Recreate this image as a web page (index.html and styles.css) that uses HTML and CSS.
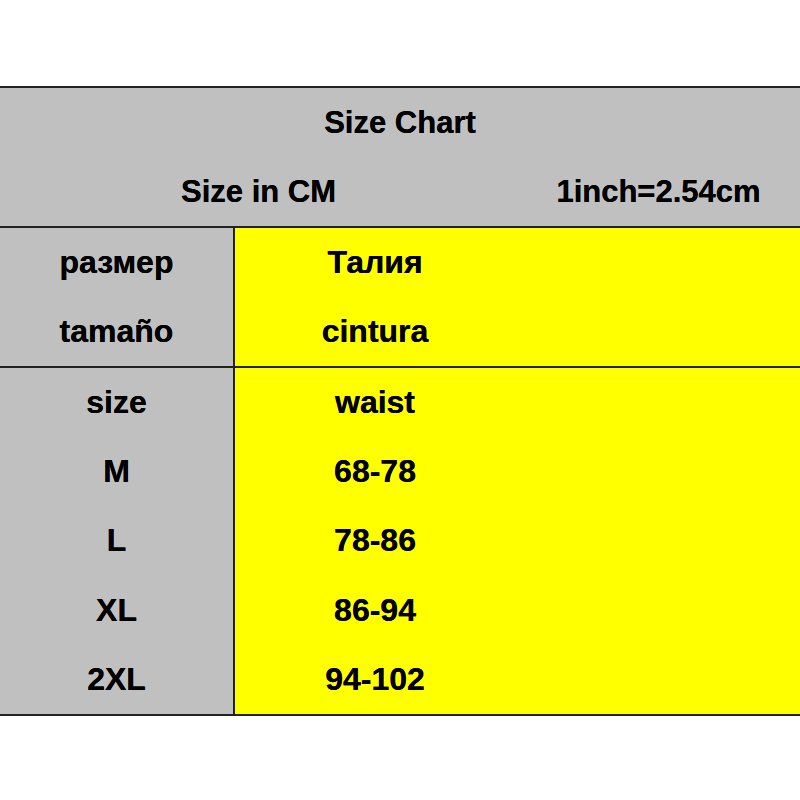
FILE: index.html
```html
<!DOCTYPE html>
<html>
<head>
<meta charset="utf-8">
<link rel="stylesheet" href="styles.css">
</head>
<body>
<div class="chart">
  <div class="head">
    <div class="row title">Size Chart</div>
    <div class="row sub"><span class="sub-left">Size in CM</span><span class="sub-right">1inch=2.54cm</span></div>
  </div>
  <div class="section">
    <div class="col-a">
      <div class="row">размер</div>
      <div class="row">tamaño</div>
    </div>
    <div class="col-b">
      <div class="row">Талия</div>
      <div class="row">cintura</div>
    </div>
  </div>
  <div class="section">
    <div class="col-a">
      <div class="row">size</div>
      <div class="row">M</div>
      <div class="row">L</div>
      <div class="row">XL</div>
      <div class="row">2XL</div>
    </div>
    <div class="col-b">
      <div class="row">waist</div>
      <div class="row">68-78</div>
      <div class="row">78-86</div>
      <div class="row">86-94</div>
      <div class="row">94-102</div>
    </div>
  </div>
</div>
</body>
</html>
```

FILE: styles.css
```css
html, body {
  margin: 0;
  padding: 0;
  background: #ffffff;
}
body {
  font-family: "Liberation Sans", Arial, sans-serif;
  font-weight: bold;
  font-size: 32px;
  color: #000000;
  text-shadow: 0 0 0.6px #000000;
}
.chart {
  margin-top: 86px;
  border-top: 2px solid #222222;
}
.head {
  background: #c0c0c0;
  border-bottom: 2px solid #222222;
  font-size: 31px;
}
.row {
  height: 69px;
  display: flex;
  align-items: center;
  justify-content: center;
}
.sub {
  justify-content: flex-start;
}
.sub-left {
  width: 517px;
  text-align: center;
}
.sub-right {
  width: 283px;
  text-align: center;
}
.section {
  display: flex;
  border-bottom: 2px solid #222222;
}
.col-a {
  width: 233px;
  background: #c0c0c0;
  border-right: 2px solid #222222;
}
.col-b {
  flex: 1;
  background: #ffff00;
}
.col-b .row {
  width: 280px;
}
.section:last-child .row {
  height: 69.2px;
}
```
